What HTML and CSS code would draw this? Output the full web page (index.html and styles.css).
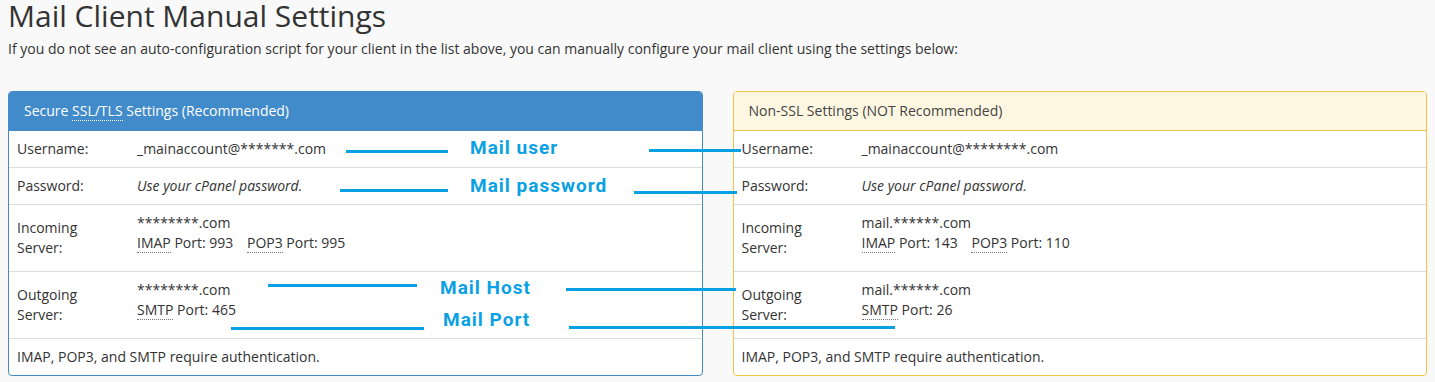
FILE: index.html
```html
<!DOCTYPE html>
<html lang="en">
<head>
    <meta charset="UTF-8">
    <meta name="viewport" content="width=device-width, initial-scale=1.0">
    <title>Mail Client Manual Settings</title>
    <link rel="stylesheet" href="styles.css">
</head>
<body>
    <div class="page">
        <h1>Mail Client Manual Settings</h1>
        <p class="intro">If you do not see an auto-configuration script for your client in the list above, you can manually configure your mail client using the settings below:</p>

        <div class="panels">
            <!-- Secure settings -->
            <div class="panel panel-primary">
                <div class="panel-heading">Secure <abbr>SSL/TLS</abbr> Settings (Recommended)</div>
                <table class="settings">
                    <tr>
                        <td class="label">Username:</td>
                        <td>_mainaccount@*******.com</td>
                    </tr>
                    <tr>
                        <td class="label">Password:</td>
                        <td><em>Use your cPanel password.</em></td>
                    </tr>
                    <tr>
                        <td class="label">Incoming Server:</td>
                        <td class="multi">
                            <div>********.com</div>
                            <div><abbr>IMAP</abbr> Port: 993 <span class="port"><abbr>POP3</abbr> Port: 995</span></div>
                        </td>
                    </tr>
                    <tr>
                        <td class="label">Outgoing Server:</td>
                        <td class="multi">
                            <div>********.com</div>
                            <div><abbr>SMTP</abbr> Port: 465</div>
                        </td>
                    </tr>
                    <tr>
                        <td colspan="2">IMAP, POP3, and SMTP require authentication.</td>
                    </tr>
                </table>
            </div>

            <!-- Non-SSL settings -->
            <div class="panel panel-warning">
                <div class="panel-heading">Non-SSL Settings (NOT Recommended)</div>
                <table class="settings">
                    <tr>
                        <td class="label">Username:</td>
                        <td>_mainaccount@********.com</td>
                    </tr>
                    <tr>
                        <td class="label">Password:</td>
                        <td><em>Use your cPanel password.</em></td>
                    </tr>
                    <tr>
                        <td class="label">Incoming Server:</td>
                        <td class="multi">
                            <div>mail.******.com</div>
                            <div><abbr>IMAP</abbr> Port: 143 <span class="port"><abbr>POP3</abbr> Port: 110</span></div>
                        </td>
                    </tr>
                    <tr>
                        <td class="label">Outgoing Server:</td>
                        <td class="multi">
                            <div>mail.******.com</div>
                            <div><abbr>SMTP</abbr> Port: 26</div>
                        </td>
                    </tr>
                    <tr>
                        <td colspan="2">IMAP, POP3, and SMTP require authentication.</td>
                    </tr>
                </table>
            </div>
        </div>

        <!-- annotations drawn on top of the screenshot -->
        <div class="notes">
            <span class="line" style="left:346px;top:150px;width:102px"></span>
            <span class="note" style="left:470px;top:135px">Mail user</span>
            <span class="line" style="left:649px;top:149px;width:92px"></span>

            <span class="line" style="left:340px;top:189px;width:108px"></span>
            <span class="note" style="left:470px;top:173px">Mail password</span>
            <span class="line" style="left:634px;top:191px;width:103px"></span>

            <span class="line" style="left:268px;top:284px;width:149px"></span>
            <span class="note" style="left:440px;top:275px">Mail Host</span>
            <span class="line" style="left:566px;top:288px;width:170px"></span>

            <span class="line" style="left:231px;top:327px;width:193px"></span>
            <span class="note" style="left:443px;top:307px">Mail Port</span>
            <span class="line" style="left:569px;top:326px;width:326px"></span>
        </div>
    </div>
</body>
</html>
```

FILE: styles.css
```css
body {
    margin: 0;
    background-color: #f9f9f9;
    color: #333;
    font-family: "Open Sans", "Liberation Sans", sans-serif;
    font-size: 14px;
    line-height: 20px;
}

.page {
    position: relative;
    padding: 2px 8px 0;
}

h1 {
    margin: 0;
    font-size: 30px;
    font-weight: normal;
    line-height: 28px;
}

.intro {
    margin: 9px 0 32px;
}

.panels {
    display: flex;
    gap: 30px;
}

.panel {
    flex: 1;
    border: 1px solid #ddd;
    border-radius: 4px;
    background-color: #fff;
    overflow: hidden;
}

.panel-heading {
    padding: 9px 15px;
    border-bottom: 1px solid transparent;
}

.panel-primary {
    border-color: #428bca;
}

.panel-primary .panel-heading {
    background-color: #428bca;
    border-color: #428bca;
    color: #fff;
}

.panel-warning {
    border-color: #f5c445;
}

.panel-warning .panel-heading {
    background-color: #fdf7e1;
    border-color: #f5c445;
    color: #444;
}

abbr {
    text-decoration: none;
    border-bottom: 1px dotted #777;
}

.panel-primary .panel-heading abbr {
    border-color: #fff;
}

.settings {
    width: 100%;
    border-collapse: collapse;
}

.settings td {
    padding: 8px;
    vertical-align: top;
}

.settings tr + tr td {
    border-top: 1px solid #ddd;
}

.settings .label {
    width: 104px;
    vertical-align: middle;
}

.settings .multi {
    padding-bottom: 18px;
}

.port {
    margin-left: 10px;
}

.notes .line {
    position: absolute;
    height: 3px;
    background-color: #0aa0e4;
}

.notes .note {
    position: absolute;
    color: #0aa0e4;
    font-family: Roboto, "DejaVu Sans", sans-serif;
    font-weight: bold;
    font-size: 19px;
    line-height: 26px;
    letter-spacing: 1px;
    white-space: nowrap;
}
```
